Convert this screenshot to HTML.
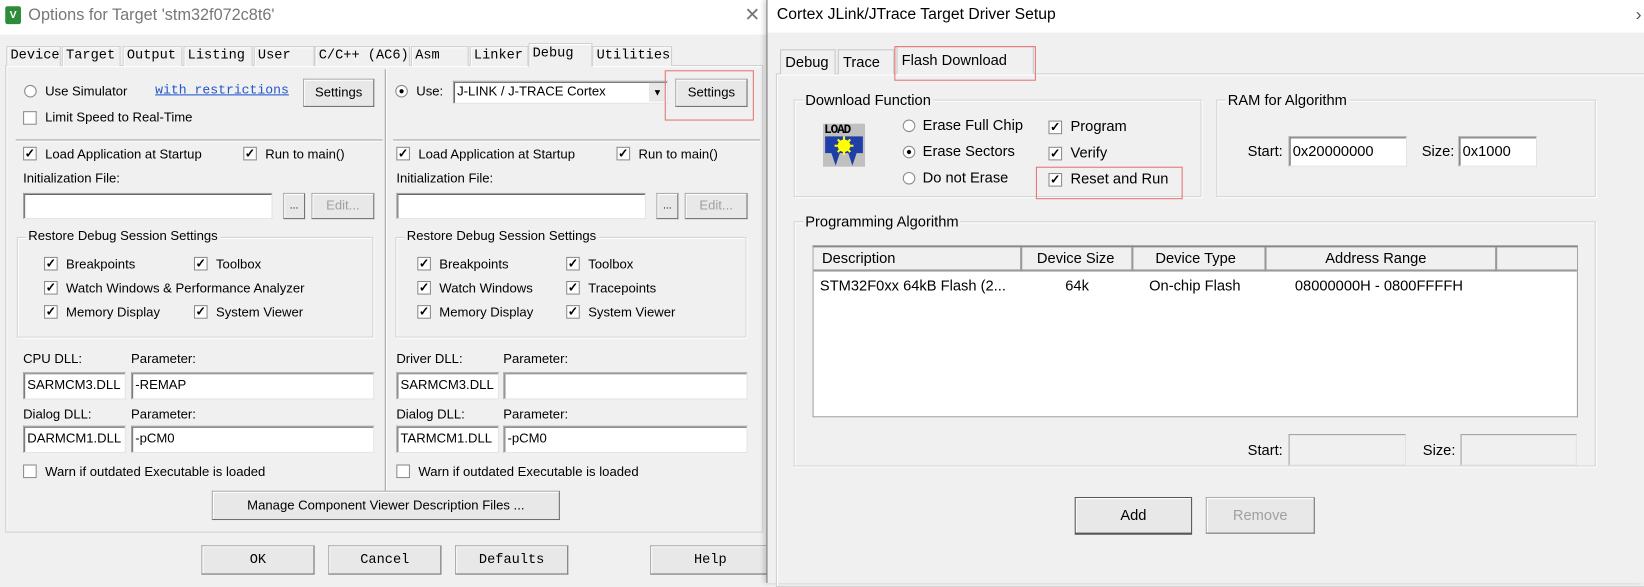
<!DOCTYPE html>
<html><head><meta charset="utf-8"><style>
*{box-sizing:border-box;margin:0;padding:0}
body{width:1644px;height:583px;overflow:hidden;background:#f0f0f0;font-family:"Liberation Sans",sans-serif;}
#w{position:absolute;left:0;top:0;width:1568px;height:556px;transform:scale(1.04847);transform-origin:0 0;font-size:12.5px;color:#000}
.a{position:absolute;white-space:nowrap}
.btn{position:absolute;background:#e8e8e8;border:1px solid #adadad;border-right-color:#6e6e6e;border-bottom-color:#6e6e6e;box-shadow:inset 1px 1px 0 #fff;text-align:center}
.in{position:absolute;background:#fff;border:1px solid #a0a0a0;border-right-color:#e3e3e3;border-bottom-color:#e3e3e3;box-shadow:inset 1px 1px 0 #696969;padding-left:3px}
.cb{position:absolute;width:13px;height:13px;background:#fff;border:1px solid #8a8a8a;font-size:12px;line-height:11px;text-align:center;font-weight:bold}
.rb{position:absolute;width:12px;height:12px;border-radius:50%;background:#fff;border:1px solid #8a8a8a}
.rb.on:after{content:"";position:absolute;left:3px;top:3px;width:4px;height:4px;border-radius:50%;background:#000}
.grp{position:absolute;border:1px solid #d5d5d5;box-shadow:1px 1px 0 #fff,inset 1px 1px 0 #fff}
.grp span{position:absolute;top:-9px;left:8px;background:#f0f0f0;padding:0 2px}
.tab{position:absolute;border:1px solid #d0d0d0;border-bottom:none;font-family:"Liberation Mono",monospace;font-size:13px;background:#f0f0f0;padding-left:3px;box-shadow:inset 1px 1px 0 #fff}
.t2{position:absolute;border:1px solid #c8c8c8;border-bottom:none;font-size:14px;background:#f0f0f0;padding-left:4px}
.red{position:absolute;border:1.5px solid #e57373}
</style></head><body><div id="w">
<!-- LEFT WINDOW -->
<div class="a" style="left:0;top:0;width:733px;height:33px;background:#fff"></div>
<div class="a" style="left:5px;top:6px;width:15px;height:17px;background:#2e8b3a;border-radius:2px;color:#fff;font-size:10px;font-weight:bold;text-align:center;line-height:17px">V</div>
<div class="a" style="left:27px;top:6px;font-size:15.5px;color:#777">Options for Target 'stm32f072c8t6'</div>
<div class="a" style="left:710px;top:4px;font-size:18px;color:#777">✕</div>
<div class="a" style="left:5px;top:62px;width:723px;height:446px;border:1px solid #d0d0d0;box-shadow:inset 1px 1px 0 #fff"></div>
<div class="tab" style="left:6px;top:44px;width:52px;height:19px">Device</div>
<div class="tab" style="left:59px;top:44px;width:56px;height:19px">Target</div>
<div class="tab" style="left:117px;top:44px;width:57px;height:19px">Output</div>
<div class="tab" style="left:175px;top:44px;width:66px;height:19px">Listing</div>
<div class="tab" style="left:242px;top:44px;width:58px;height:19px">User</div>
<div class="tab" style="left:300px;top:44px;width:91px;height:19px">C/C++ (AC6)</div>
<div class="tab" style="left:392px;top:44px;width:55px;height:19px">Asm</div>
<div class="tab" style="left:448px;top:44px;width:56px;height:19px">Linker</div>
<div class="tab" style="left:504px;top:41px;width:61px;height:23px;border-bottom:1px solid #f0f0f0;padding-top:1px">Debug</div>
<div class="tab" style="left:565px;top:44px;width:76px;height:19px">Utilities</div>

<div class="rb" style="left:23px;top:81px"></div><div class="a" style="left:43px;top:80px">Use Simulator</div>
<div class="a" style="left:148px;top:79px;font-family:'Liberation Mono',monospace;font-size:12.5px;color:#2255cc;text-decoration:underline">with restrictions</div>
<div class="btn" style="left:289px;top:75px;width:68px;height:27px;line-height:25px">Settings</div>
<div class="cb" style="left:22px;top:106px"></div><div class="a" style="left:43px;top:105px">Limit Speed to Real-Time</div>
<div class="rb on" style="left:377px;top:81px"></div><div class="a" style="left:397px;top:80px">Use:</div>
<div class="in" style="left:432px;top:77px;width:205px;height:22px;line-height:19px">J-LINK / J-TRACE Cortex</div>
<div class="a" style="left:619px;top:79px;width:16px;height:18px;background:#e8e8e8;font-size:9px;text-align:center;line-height:18px">▼</div>
<div class="btn" style="left:644px;top:75px;width:69px;height:27px;line-height:25px">Settings</div>
<div class="red" style="left:634px;top:67px;width:85px;height:48px"></div>
<div class="a" style="left:15px;top:133px;width:350px;height:2px;border-top:1px solid #a0a0a0;border-bottom:1px solid #fff"></div>
<div class="a" style="left:375px;top:133px;width:350px;height:2px;border-top:1px solid #a0a0a0;border-bottom:1px solid #fff"></div>
<div class="a" style="left:367px;top:66px;width:2px;height:415px;border-left:1px solid #a0a0a0;border-right:1px solid #fff"></div>

<!-- left column -->
<div class="cb" style="left:22px;top:140px">✓</div><div class="a" style="left:43px;top:140px">Load Application at Startup</div>
<div class="cb" style="left:232px;top:140px">✓</div><div class="a" style="left:253px;top:140px">Run to main()</div>
<div class="a" style="left:22px;top:163px">Initialization File:</div>
<div class="in" style="left:22px;top:184px;width:238px;height:25px"></div>
<div class="btn" style="left:270px;top:184px;width:21px;height:25px;line-height:23px;font-size:10px">...</div>
<div class="btn" style="left:297px;top:184px;width:60px;height:25px;line-height:23px;color:#a0a0a0">Edit...</div>
<div class="grp" style="left:16px;top:226px;width:340px;height:96px"><span>Restore Debug Session Settings</span></div>
<div class="cb" style="left:42px;top:245px">✓</div><div class="a" style="left:63px;top:245px">Breakpoints</div>
<div class="cb" style="left:185px;top:245px">✓</div><div class="a" style="left:206px;top:245px">Toolbox</div>
<div class="cb" style="left:42px;top:268px">✓</div><div class="a" style="left:63px;top:268px">Watch Windows &amp; Performance Analyzer</div>
<div class="cb" style="left:42px;top:291px">✓</div><div class="a" style="left:63px;top:291px">Memory Display</div>
<div class="cb" style="left:185px;top:291px">✓</div><div class="a" style="left:206px;top:291px">System Viewer</div>
<div class="a" style="left:22px;top:335px">CPU DLL:</div><div class="a" style="left:125px;top:335px">Parameter:</div>
<div class="in" style="left:22px;top:355px;width:98px;height:26px;line-height:23px">SARMCM3.DLL</div>
<div class="in" style="left:125px;top:355px;width:232px;height:26px;line-height:23px">-REMAP</div>
<div class="a" style="left:22px;top:388px">Dialog DLL:</div><div class="a" style="left:125px;top:388px">Parameter:</div>
<div class="in" style="left:22px;top:406px;width:98px;height:26px;line-height:23px">DARMCM1.DLL</div>
<div class="in" style="left:125px;top:406px;width:232px;height:26px;line-height:23px">-pCM0</div>
<div class="cb" style="left:22px;top:443px"></div><div class="a" style="left:43px;top:443px">Warn if outdated Executable is loaded</div>

<!-- right column -->
<div class="cb" style="left:378px;top:140px">✓</div><div class="a" style="left:399px;top:140px">Load Application at Startup</div>
<div class="cb" style="left:588px;top:140px">✓</div><div class="a" style="left:609px;top:140px">Run to main()</div>
<div class="a" style="left:378px;top:163px">Initialization File:</div>
<div class="in" style="left:378px;top:184px;width:238px;height:25px"></div>
<div class="btn" style="left:626px;top:184px;width:21px;height:25px;line-height:23px;font-size:10px">...</div>
<div class="btn" style="left:653px;top:184px;width:60px;height:25px;line-height:23px;color:#a0a0a0">Edit...</div>
<div class="grp" style="left:377px;top:226px;width:335px;height:96px"><span>Restore Debug Session Settings</span></div>
<div class="cb" style="left:398px;top:245px">✓</div><div class="a" style="left:419px;top:245px">Breakpoints</div>
<div class="cb" style="left:540px;top:245px">✓</div><div class="a" style="left:561px;top:245px">Toolbox</div>
<div class="cb" style="left:398px;top:268px">✓</div><div class="a" style="left:419px;top:268px">Watch Windows</div>
<div class="cb" style="left:540px;top:268px">✓</div><div class="a" style="left:561px;top:268px">Tracepoints</div>
<div class="cb" style="left:398px;top:291px">✓</div><div class="a" style="left:419px;top:291px">Memory Display</div>
<div class="cb" style="left:540px;top:291px">✓</div><div class="a" style="left:561px;top:291px">System Viewer</div>
<div class="a" style="left:378px;top:335px">Driver DLL:</div><div class="a" style="left:480px;top:335px">Parameter:</div>
<div class="in" style="left:378px;top:355px;width:98px;height:26px;line-height:23px">SARMCM3.DLL</div>
<div class="in" style="left:480px;top:355px;width:233px;height:26px"></div>
<div class="a" style="left:378px;top:388px">Dialog DLL:</div><div class="a" style="left:480px;top:388px">Parameter:</div>
<div class="in" style="left:378px;top:406px;width:98px;height:26px;line-height:23px">TARMCM1.DLL</div>
<div class="in" style="left:480px;top:406px;width:233px;height:26px;line-height:23px">-pCM0</div>
<div class="cb" style="left:378px;top:443px"></div><div class="a" style="left:399px;top:443px">Warn if outdated Executable is loaded</div>

<div class="btn" style="left:202px;top:468px;width:332px;height:28px;line-height:26px">Manage Component Viewer Description Files ...</div>
<div class="btn" style="left:192px;top:520px;width:108px;height:28px;line-height:26px;font-family:'Liberation Mono',monospace;font-size:13px">OK</div>
<div class="btn" style="left:313px;top:520px;width:108px;height:28px;line-height:26px;font-family:'Liberation Mono',monospace;font-size:13px">Cancel</div>
<div class="btn" style="left:434px;top:520px;width:108px;height:28px;line-height:26px;font-family:'Liberation Mono',monospace;font-size:13px">Defaults</div>
<div class="btn" style="left:620px;top:520px;width:115px;height:28px;line-height:26px;font-family:'Liberation Mono',monospace;font-size:13px">Help</div>

<!-- RIGHT WINDOW -->
<div class="a" style="left:731px;top:0;width:837px;height:556px;background:#f0f0f0;border-left:1px solid #777;box-shadow:-3px 0 4px rgba(0,0,0,.15)"></div>
<div class="a" style="left:732px;top:0;width:836px;height:31px;background:#fff"></div>
<div class="a" style="left:741px;top:5px;font-size:15px">Cortex JLink/JTrace Target Driver Setup</div>
<div class="a" style="left:1560px;top:4px;font-size:17px;color:#555">›</div>
<div class="a" style="left:740px;top:70px;width:830px;height:490px;border:1px solid #d0d0d0;box-shadow:inset 1px 1px 0 #fff"></div>
<div class="t2" style="left:744px;top:47px;width:53px;height:24px;line-height:23px">Debug</div>
<div class="t2" style="left:799px;top:47px;width:54px;height:24px;line-height:23px">Trace</div>
<div class="t2" style="left:855px;top:44px;width:131px;height:27px;line-height:24px;border-bottom:1px solid #f0f0f0;background:#f0f0f0">Flash Download</div>
<div class="red" style="left:853px;top:44px;width:135px;height:33px"></div>

<div class="grp" style="left:757px;top:95px;width:389px;height:93px"><span style="font-size:14px">Download Function</span></div>
<div class="a" style="left:785px;top:118px;width:40px;height:41px;background:#c0c0c0"></div>
<div class="a" style="left:786px;top:117px;font-family:'Liberation Mono',monospace;font-size:12px;font-weight:bold;letter-spacing:-1px">LOAD</div>
<svg class="a" style="left:785px;top:130px" width="40" height="29" viewBox="0 0 40 29"><path d="M2 0h36v16h-6l-4 12l-4-12h-8l-4 12l-4-12H2z" fill="#1f3fa8"/><circle cx="20" cy="9" r="6" fill="#ff0"/><path d="M20 0v18M11 9h18M14 3l12 12M26 3L14 15" stroke="#ff0" stroke-width="2"/></svg>
<div class="rb" style="left:861px;top:114px"></div><div class="a" style="left:880px;top:111px;font-size:14px">Erase Full Chip</div>
<div class="rb on" style="left:861px;top:139px"></div><div class="a" style="left:880px;top:136px;font-size:14px">Erase Sectors</div>
<div class="rb" style="left:861px;top:164px"></div><div class="a" style="left:880px;top:161px;font-size:14px">Do not Erase</div>
<div class="cb" style="left:1000px;top:115px">✓</div><div class="a" style="left:1021px;top:112px;font-size:14px">Program</div>
<div class="cb" style="left:1000px;top:140px">✓</div><div class="a" style="left:1021px;top:137px;font-size:14px">Verify</div>
<div class="cb" style="left:1000px;top:165px">✓</div><div class="a" style="left:1021px;top:162px;font-size:14px">Reset and Run</div>
<div class="red" style="left:988px;top:159px;width:140px;height:31px"></div>

<div class="grp" style="left:1160px;top:95px;width:362px;height:93px"><span style="font-size:14px">RAM for Algorithm</span></div>
<div class="a" style="left:1190px;top:136px;font-size:14px">Start:</div>
<div class="in" style="left:1229px;top:130px;width:113px;height:29px;line-height:26px;font-size:14px">0x20000000</div>
<div class="a" style="left:1356px;top:136px;font-size:14px">Size:</div>
<div class="in" style="left:1391px;top:130px;width:75px;height:29px;line-height:26px;font-size:14px">0x1000</div>

<div class="grp" style="left:757px;top:211px;width:765px;height:234px"><span style="font-size:14px">Programming Algorithm</span></div>
<div class="a" style="left:775px;top:234px;width:730px;height:164px;background:#fff;border:1px solid #a0a0a0;border-top:2px solid #888"></div>
<div class="a" style="left:776px;top:236px;width:728px;height:23px;background:#f0f0f0;border-bottom:2px solid #999"></div>
<div class="a" style="left:973px;top:236px;width:2px;height:23px;background:#999"></div>
<div class="a" style="left:1079px;top:236px;width:2px;height:23px;background:#999"></div>
<div class="a" style="left:1206px;top:236px;width:2px;height:23px;background:#999"></div>
<div class="a" style="left:1426px;top:236px;width:2px;height:23px;background:#999"></div>
<div class="a" style="left:784px;top:238px;font-size:14px">Description</div>
<div class="a" style="left:989px;top:238px;font-size:14px">Device Size</div>
<div class="a" style="left:1102px;top:238px;font-size:14px">Device Type</div>
<div class="a" style="left:1264px;top:238px;font-size:14px">Address Range</div>
<div class="a" style="left:782px;top:264px;font-size:14px">STM32F0xx 64kB Flash (2...</div>
<div class="a" style="left:1016px;top:264px;font-size:14px">64k</div>
<div class="a" style="left:1096px;top:264px;font-size:14px">On-chip Flash</div>
<div class="a" style="left:1235px;top:264px;font-size:14px">08000000H - 0800FFFFH</div>
<div class="a" style="left:1190px;top:421px;font-size:14px">Start:</div>
<div class="in" style="left:1229px;top:414px;width:112px;height:30px;background:#f0f0f0;box-shadow:none"></div>
<div class="a" style="left:1357px;top:421px;font-size:14px">Size:</div>
<div class="in" style="left:1393px;top:414px;width:111px;height:30px;background:#f0f0f0;box-shadow:none"></div>
<div class="btn" style="left:1025px;top:474px;width:112px;height:36px;line-height:33px;font-size:14px;border:1px solid #555;border-bottom-width:2px">Add</div>
<div class="btn" style="left:1150px;top:474px;width:104px;height:35px;line-height:33px;font-size:14px;color:#a0a0a0">Remove</div>
</div></body></html>
